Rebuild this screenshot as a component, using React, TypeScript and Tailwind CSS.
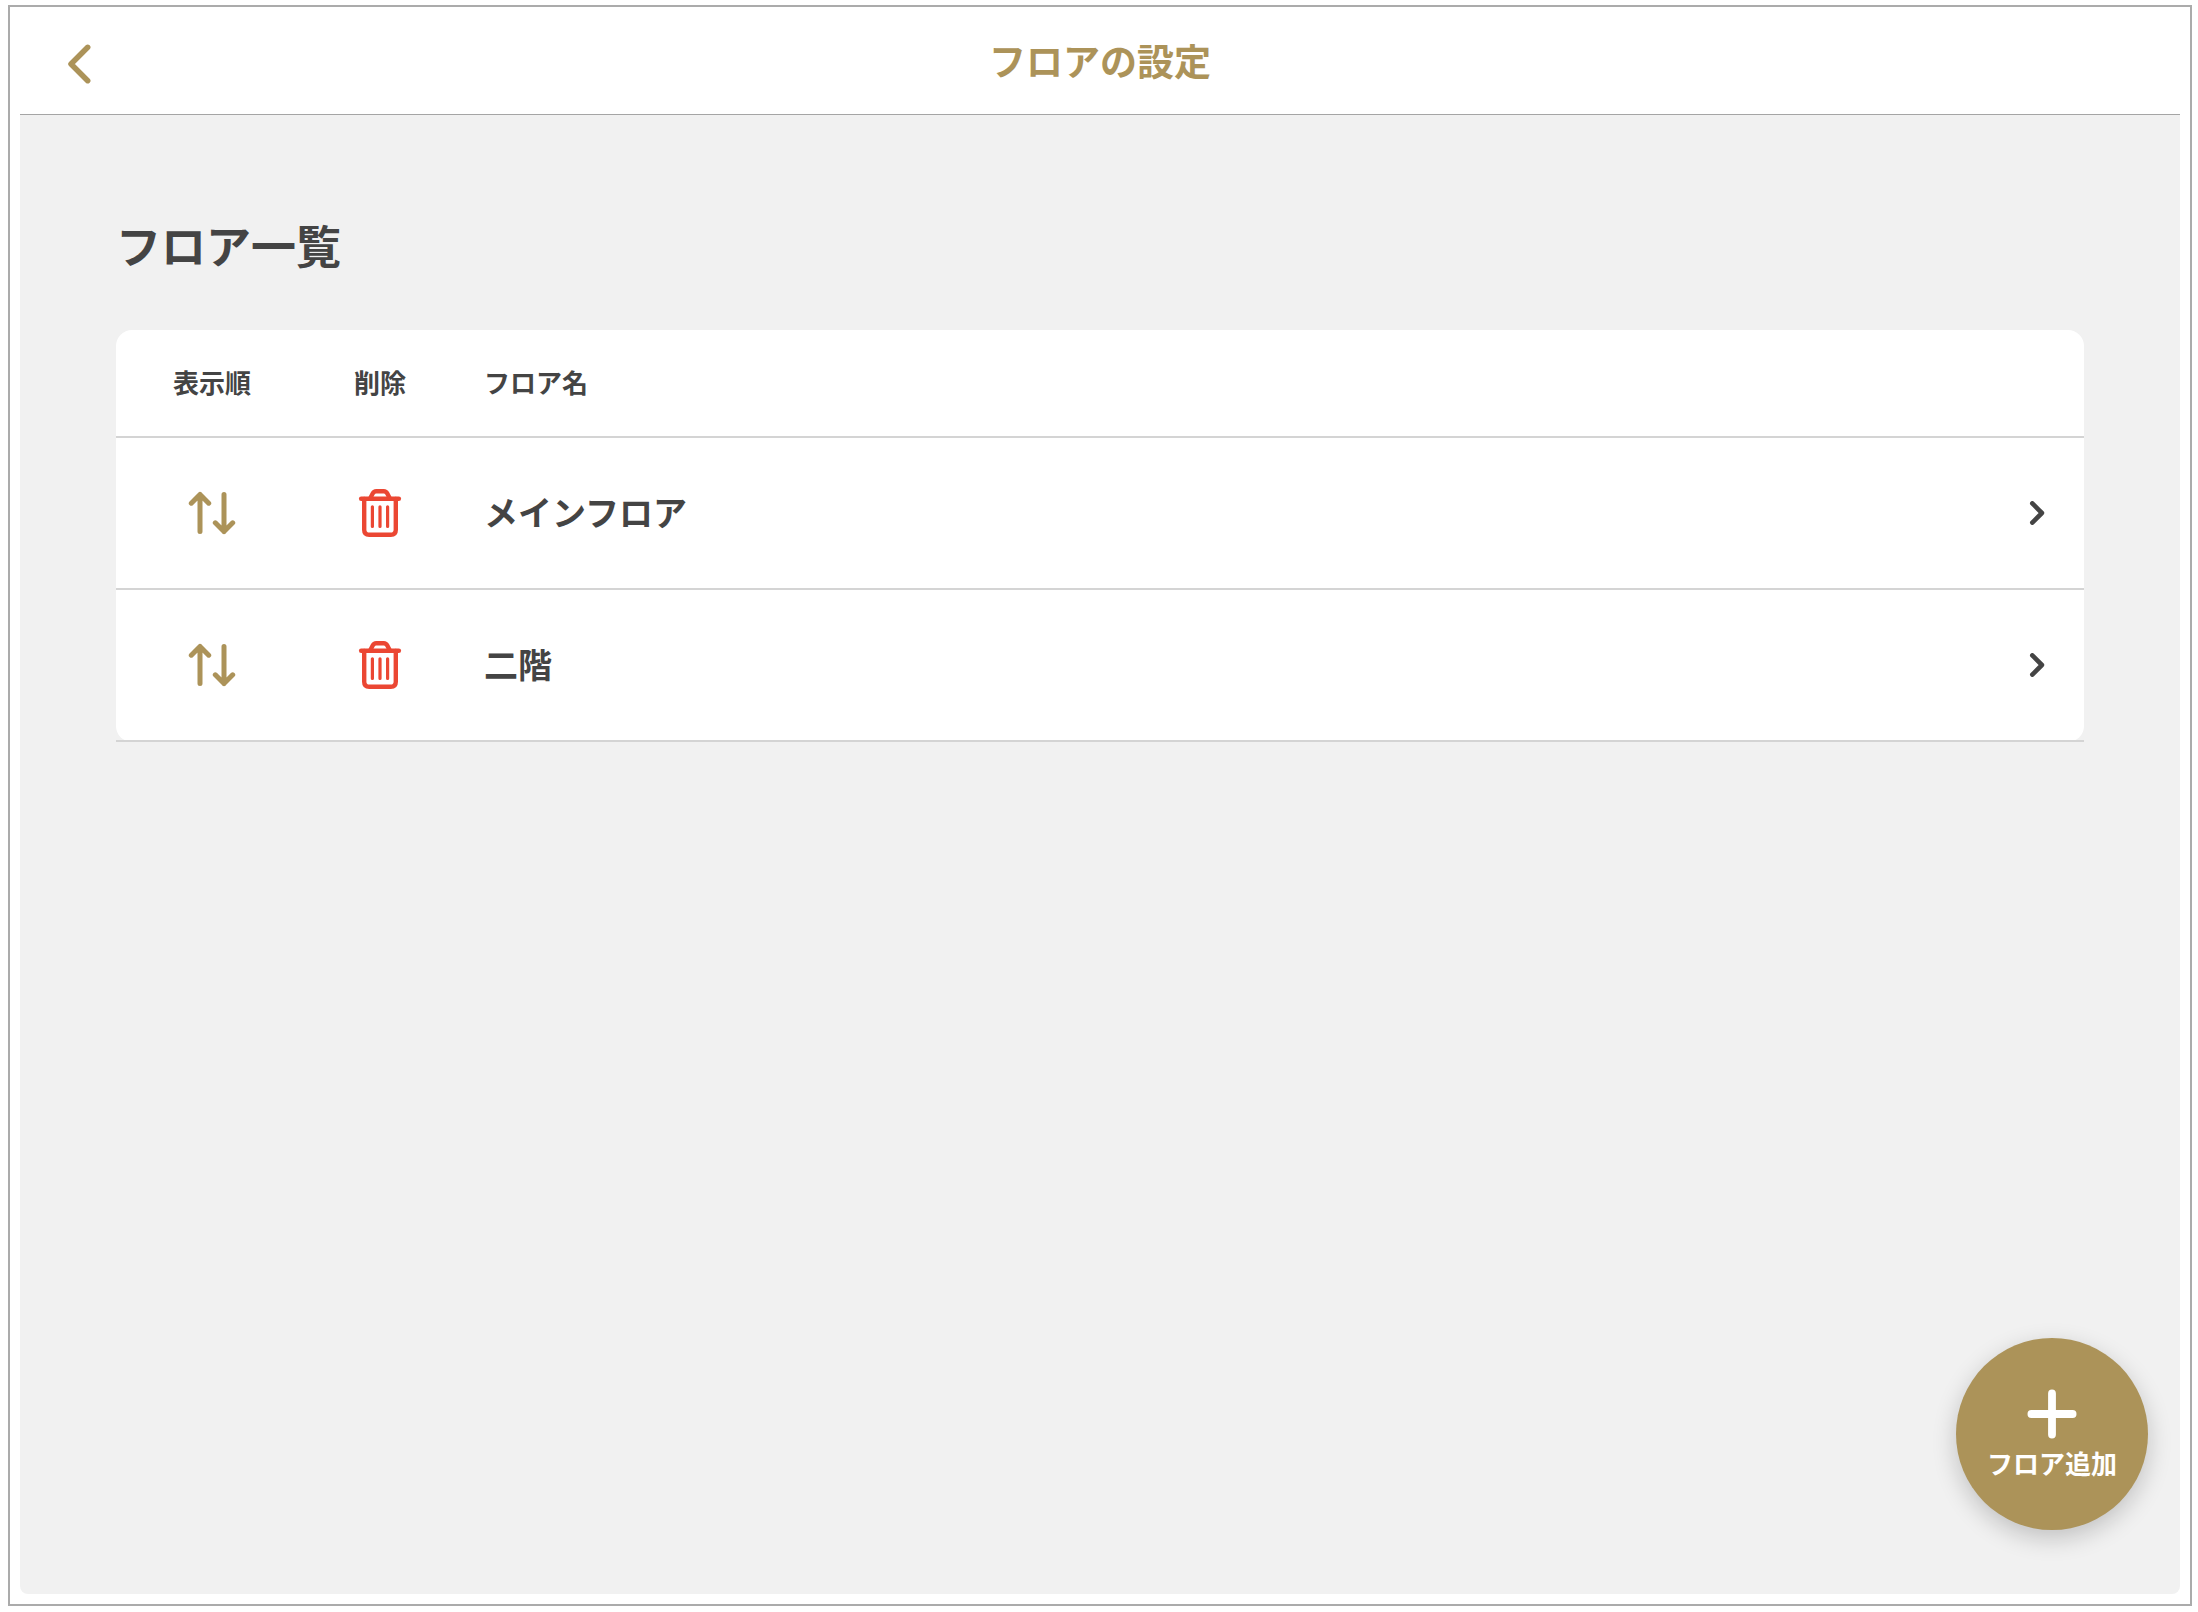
type Floor = {
    id: number;
    name: string;
};

const floors: Floor[] = [
    { id: 1, name: 'メインフロア' },
    { id: 2, name: '二階' },
];

function BackIcon() {
    return (
        <svg viewBox="0 0 24 40" className="h-10 w-6" fill="none" stroke="currentColor" strokeWidth="5.5" strokeLinecap="round" strokeLinejoin="round" aria-hidden="true">
            <path d="M19.7 3.3 3 20l16.7 16.7" />
        </svg>
    );
}

function SortIcon() {
    return (
        <svg viewBox="0 0 48 48" className="size-12" fill="none" stroke="currentColor" strokeWidth="5" strokeLinecap="round" strokeLinejoin="round" aria-hidden="true">
            <path d="M12 42.5V5.4M3.3 14.2 12 5.4l8.7 8.8" />
            <path d="M36 5.4v37.1M27.3 33.8l8.7 8.7 8.7-8.7" />
        </svg>
    );
}

function TrashIcon() {
    return (
        <svg viewBox="0 0 48 48" className="size-12" fill="none" stroke="currentColor" strokeWidth="4.4" strokeLinecap="round" strokeLinejoin="round" aria-hidden="true">
            <path d="M5.2 9.7h37.6" strokeWidth="4.6" />
            <path d="M14.4 9l2.3-4.4Q17.9 2.2 20.2 2.2h7.6q2.3 0 3.5 2.4L33.6 9" />
            <path d="M8.2 10v30.8q0 5 5 5h21.6q5 0 5-5V10" />
            <path d="M16.4 17.8v19.6M24 17.8v19.6M31.6 17.8v19.6" strokeWidth="3.2" />
        </svg>
    );
}

function ChevronIcon() {
    return (
        <svg viewBox="0 0 24 24" className="size-6" fill="none" stroke="currentColor" strokeWidth="4.6" strokeLinecap="round" strokeLinejoin="round" aria-hidden="true">
            <path d="M8.3 2.4 17.9 12l-9.6 9.6" />
        </svg>
    );
}

function PlusIcon() {
    return (
        <svg viewBox="0 0 50 50" className="size-[50px]" fill="none" stroke="currentColor" strokeWidth="7.8" strokeLinecap="round" aria-hidden="true">
            <path d="M25 4.4v41.2M4.4 25h41.2" />
        </svg>
    );
}

function FloorRow({ floor }: { floor: Floor }) {
    return (
        <tr className="h-[152px]">
            <td className="border-b-2 border-[#d4d4d4] text-center">
                <button type="button" aria-label="表示順" className="block mx-auto text-[#ac9359]">
                    <SortIcon />
                </button>
            </td>
            <td className="border-b-2 border-[#d4d4d4] text-center">
                <button type="button" aria-label="削除" className="block mx-auto text-[#eb4733]">
                    <TrashIcon />
                </button>
            </td>
            <td className="border-b-2 border-[#d4d4d4] pb-0.5 pl-8 text-[34px] leading-[48px] font-bold">
                <a href="#">{floor.name}</a>
            </td>
            <td className="border-b-2 border-[#d4d4d4] pr-9">
                <a href="#" aria-label={floor.name} className="flex justify-end">
                    <ChevronIcon />
                </a>
            </td>
        </tr>
    );
}

export default function App() {
    return (
        <div className="flex min-h-screen flex-col bg-white pt-[5px] pr-[6px] pb-[6px] pl-2 font-['Noto_Sans_CJK_JP',sans-serif] text-[#444444]">
            <div className="flex flex-1 flex-col border-2 border-[#ababab] px-[10px] pb-[10px]">
                {/* Header */}
                <header className="grid h-[108px] grid-cols-[1fr_auto_1fr] items-center border-b border-[#a5a5a5] px-12 pt-1.5 text-[#ac9359]">
                    <button type="button" aria-label="戻る" className="justify-self-start">
                        <BackIcon />
                    </button>
                    <h1 className="pb-2 text-[37px] leading-[48px] font-bold">フロアの設定</h1>
                </header>

                {/* Main content */}
                <main className="relative flex-1 rounded-b-lg bg-[#f1f1f1] px-24 pt-[98px]">
                    <h2 className="mb-[53px] text-[45px] leading-[64px] font-bold">フロア一覧</h2>

                    <div className="rounded-2xl bg-white">
                        <table className="w-full table-fixed border-separate border-spacing-0">
                            <colgroup>
                                <col className="w-48" />
                                <col className="w-36" />
                                <col />
                                <col className="w-24" />
                            </colgroup>
                            <thead>
                                <tr className="h-[108px] text-[26px] leading-10">
                                    <th scope="col" className="border-b-2 border-[#d4d4d4] pb-0.5 font-bold">表示順</th>
                                    <th scope="col" className="border-b-2 border-[#d4d4d4] pb-0.5 font-bold">削除</th>
                                    <th scope="col" className="border-b-2 border-[#d4d4d4] pb-0.5 pl-8 text-left font-bold">フロア名</th>
                                    <td className="border-b-2 border-[#d4d4d4]" />
                                </tr>
                            </thead>
                            <tbody>
                                {floors.map((floor) => (
                                    <FloorRow key={floor.id} floor={floor} />
                                ))}
                            </tbody>
                        </table>
                    </div>

                    {/* Floating add button */}
                    <button
                        type="button"
                        className="absolute right-8 bottom-16 flex size-48 flex-col items-center justify-center gap-1 rounded-full bg-[#ac9359] pt-1 text-[26px] leading-10 font-bold text-white shadow-[0_8px_24px_rgba(0,0,0,0.2)]"
                    >
                        <PlusIcon />
                        フロア追加
                    </button>
                </main>
            </div>
        </div>
    );
}
